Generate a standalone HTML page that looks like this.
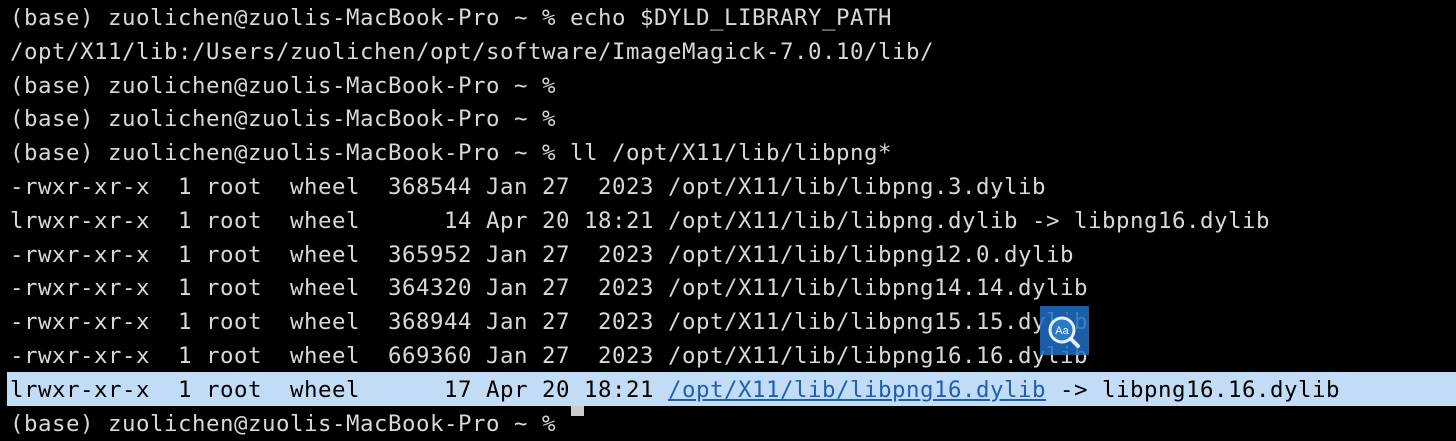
<!DOCTYPE html>
<html><head><style>
html,body{margin:0;padding:0;background:#000;width:1456px;height:416px;overflow:hidden}
pre{margin:0;padding:0 0 0 10px;font-family:"DejaVu Sans Mono","Liberation Mono",monospace;font-size:22.4px;line-height:33.8px;color:#d8d8d8;letter-spacing:0.52px}
.hl{position:absolute;left:7px;top:372px;width:1449px;height:34px;background:#c3dcf6}
.hlt{color:#000}
a{color:#1f5fb0;text-decoration:underline}
.cur{position:absolute;left:571px;top:406px;width:13px;height:10px;background:#ccc}
.icon{position:absolute;left:1040px;top:306px;width:49px;height:49px;background:rgba(30,110,200,0.85)}
</style></head><body>
<div class="hl"></div>
<div class="cur"></div>
<pre style="position:absolute;top:2px;left:0">(base) zuolichen@zuolis-MacBook-Pro ~ % echo $DYLD_LIBRARY_PATH
/opt/X11/lib:/Users/zuolichen/opt/software/ImageMagick-7.0.10/lib/
(base) zuolichen@zuolis-MacBook-Pro ~ %
(base) zuolichen@zuolis-MacBook-Pro ~ %
(base) zuolichen@zuolis-MacBook-Pro ~ % ll /opt/X11/lib/libpng*
-rwxr-xr-x  1 root  wheel  368544 Jan 27  2023 /opt/X11/lib/libpng.3.dylib
lrwxr-xr-x  1 root  wheel      14 Apr 20 18:21 /opt/X11/lib/libpng.dylib -> libpng16.dylib
-rwxr-xr-x  1 root  wheel  365952 Jan 27  2023 /opt/X11/lib/libpng12.0.dylib
-rwxr-xr-x  1 root  wheel  364320 Jan 27  2023 /opt/X11/lib/libpng14.14.dylib
-rwxr-xr-x  1 root  wheel  368944 Jan 27  2023 /opt/X11/lib/libpng15.15.dylib
-rwxr-xr-x  1 root  wheel  669360 Jan 27  2023 /opt/X11/lib/libpng16.16.dylib
<span class="hlt">lrwxr-xr-x  1 root  wheel      17 Apr 20 18:21 <a>/opt/X11/lib/libpng16.dylib</a> -&gt; libpng16.16.dylib</span>
(base) zuolichen@zuolis-MacBook-Pro ~ %</pre>
<div class="icon"><svg width="49" height="49" viewBox="0 0 49 49"><circle cx="22" cy="24" r="12" fill="#2a78c8" stroke="#e8eef6" stroke-width="3"/><line x1="31" y1="33" x2="38" y2="40" stroke="#e8eef6" stroke-width="4" stroke-linecap="round"/><text x="22" y="28" font-family="Liberation Sans,sans-serif" font-size="11" fill="#fff" text-anchor="middle">Aa</text></svg></div>
</body></html>
